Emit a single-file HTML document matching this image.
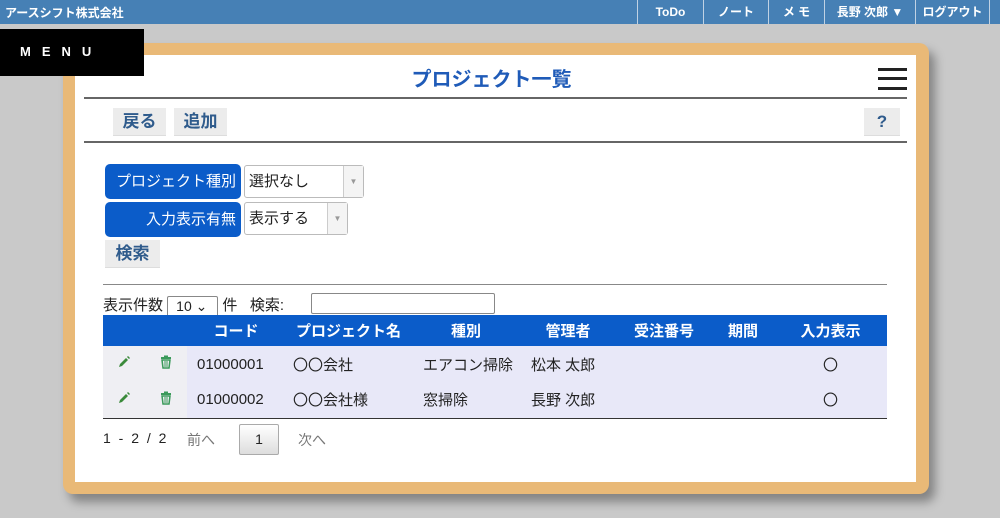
<!DOCTYPE html>
<html><head><meta charset="utf-8"><style>
*{box-sizing:border-box;margin:0;padding:0}
body{width:1000px;height:518px;overflow:hidden;position:relative;background:#c9c9c9;font-family:"Liberation Sans","Noto Sans CJK JP",sans-serif;font-size:14px;color:#222}
.top{position:absolute;left:0;top:0;width:1000px;height:24px;background:#4680b5;color:#fff;font-weight:bold;font-size:12px}
.top .brand{position:absolute;left:5px;top:4px}
.nav{position:absolute;top:0;height:24px;border-left:1px solid #c0d2e4;text-align:center;line-height:24px}
.menu{position:absolute;left:0;top:29px;width:144px;height:47px;background:#000;color:#fff;font-weight:bold;font-size:13px;letter-spacing:11px;padding:15px 0 0 20px}
.frame{position:absolute;left:63px;top:43px;width:866px;height:451px;background:#e9b977;border-radius:10px;box-shadow:6px 8px 10px rgba(0,0,0,.35)}
.inner{position:absolute;left:75px;top:55px;width:841px;height:427px;background:#fff}
.abs{position:absolute}
.title{left:75px;width:841px;top:63px;text-align:center;color:#1f5bb8;font-weight:bold;font-size:20px;padding-right:8px}
.hline{height:2px;background:#666}
.btn{background:#ececec;color:#2f5b8c;font-weight:bold;font-size:17px;text-align:center;line-height:27px;border-bottom:1px solid #ddd}
.lbl{background:#0b5cc9;color:#fff;border-radius:5px;text-align:right;padding-right:5px;line-height:35px;font-size:15px}
.sel{border:1px solid #bbb;border-radius:3px;background:#fff;font-size:15px;line-height:31px;padding-left:4px}
.sel span{position:absolute;right:0;top:0;width:20px;height:31px;border-left:1px solid #ccc;background:#f4f4f4;color:#999;font-size:8px;text-align:center}
th{color:#fff;font-weight:bold;font-size:15px}
table{border-collapse:collapse;position:absolute;left:103px;top:315px;width:784px;table-layout:fixed}
thead tr{background:#0b5cc9;height:31px}
tbody tr{height:36px;background:#e8e8f8}
td{font-size:15px;white-space:nowrap}
.ic{background:#efeff3;text-align:center}
.c{font-family:"Noto Sans CJK JP",sans-serif}
</style></head><body>
<div class="top"><span class="brand">アースシフト株式会社</span>
<div class="nav" style="left:637px;width:66px">ToDo</div>
<div class="nav" style="left:703px;width:65px">ノート</div>
<div class="nav" style="left:768px;width:56px">メ モ</div>
<div class="nav" style="left:824px;width:91px">長野 次郎 ▼</div>
<div class="nav" style="left:915px;width:75px;border-right:1px solid #c0d2e4">ログアウト</div>
</div>
<div class="frame"></div>
<div class="inner"></div>
<div class="menu">MENU</div>
<div class="abs title">プロジェクト一覧</div>
<div class="abs" style="left:878px;top:68px;width:29px;height:3px;background:#222"></div>
<div class="abs" style="left:878px;top:77px;width:29px;height:3px;background:#222"></div>
<div class="abs" style="left:878px;top:87px;width:29px;height:3px;background:#222"></div>
<div class="abs hline" style="left:84px;top:97px;width:823px"></div>
<div class="abs btn" style="left:113px;top:108px;width:53px">戻る</div>
<div class="abs btn" style="left:174px;top:108px;width:53px">追加</div>
<div class="abs btn" style="left:864px;top:108px;width:36px">?</div>
<div class="abs hline" style="left:84px;top:141px;width:823px"></div>
<div class="abs lbl" style="left:105px;top:164px;width:136px">プロジェクト種別</div>
<div class="abs sel" style="left:244px;top:165px;width:120px;height:33px">選択なし<span>▼</span></div>
<div class="abs lbl" style="left:105px;top:202px;width:136px">入力表示有無</div>
<div class="abs sel" style="left:244px;top:202px;width:104px;height:33px">表示する<span>▼</span></div>
<div class="abs btn" style="left:105px;top:240px;width:55px">検索</div>
<div class="abs" style="left:103px;top:284px;width:784px;height:1px;background:#888"></div>
<div class="abs" style="left:103px;top:294px;font-size:15px">表示件数 <span style="display:inline-block;width:51px;height:21px;border:1px solid #888;border-radius:2px;font-size:14px;line-height:19px;padding-left:8px;vertical-align:middle">10 ⌄</span> 件 &nbsp; 検索:</div>
<div class="abs" style="left:311px;top:293px;width:184px;height:21px;border:1px solid #888;border-radius:2px"></div>
<table>
<colgroup><col style="width:42px"><col style="width:42px"><col style="width:98px"><col style="width:127px"><col style="width:108px"><col style="width:96px"><col style="width:96px"><col style="width:62px"><col></colgroup>
<thead><tr><th></th><th></th><th>コード</th><th>プロジェクト名</th><th>種別</th><th>管理者</th><th>受注番号</th><th>期間</th><th>入力表示</th></tr></thead>
<tbody>
<tr><td class="ic"><svg width="14" height="14" viewBox="0 0 14 14"><path d="M2 12l1-3 6-6 2 2-6 6z" fill="#3a8a3a"/><path d="M10 2l1-1 2 2-1 1z" fill="#3a8a3a"/></svg></td><td class="ic"><svg width="12" height="14" viewBox="0 0 12 14"><rect x="1" y="2" width="10" height="2" fill="#3a9a5a"/><rect x="4" y="0.5" width="4" height="2" fill="#3a9a5a"/><path d="M2 5h8l-1 8H3z" fill="none" stroke="#3a9a5a" stroke-width="1.5"/><path d="M5 6v6M7 6v6" stroke="#3a9a5a"/></svg></td><td style="padding-left:10px">01000001</td><td style="padding-left:8px" class="c">〇〇会社</td><td style="padding-left:11px" class="c">エアコン掃除</td><td style="padding-left:11px">松本 太郎</td><td></td><td></td><td style="text-align:center" class="c">〇</td></tr>
<tr style="border-bottom:1px solid #333"><td class="ic"><svg width="14" height="14" viewBox="0 0 14 14"><path d="M2 12l1-3 6-6 2 2-6 6z" fill="#3a8a3a"/><path d="M10 2l1-1 2 2-1 1z" fill="#3a8a3a"/></svg></td><td class="ic"><svg width="12" height="14" viewBox="0 0 12 14"><rect x="1" y="2" width="10" height="2" fill="#3a9a5a"/><rect x="4" y="0.5" width="4" height="2" fill="#3a9a5a"/><path d="M2 5h8l-1 8H3z" fill="none" stroke="#3a9a5a" stroke-width="1.5"/><path d="M5 6v6M7 6v6" stroke="#3a9a5a"/></svg></td><td style="padding-left:10px">01000002</td><td style="padding-left:8px" class="c">〇〇会社様</td><td style="padding-left:11px" class="c">窓掃除</td><td style="padding-left:11px">長野 次郎</td><td></td><td></td><td style="text-align:center" class="c">〇</td></tr>
</tbody></table>
<div class="abs" style="left:103px;top:430px;font-size:14px;letter-spacing:2px">1 - 2 / 2</div>
<div class="abs" style="left:187px;top:430px;font-size:14px;color:#777">前へ</div>
<div class="abs" style="left:239px;top:424px;width:40px;height:31px;border:1px solid #aaa;border-radius:2px;background:linear-gradient(#fff,#ddd);text-align:center;line-height:29px;font-size:14px">1</div>
<div class="abs" style="left:298px;top:430px;color:#777;font-size:14px">次へ</div>
</body></html>
